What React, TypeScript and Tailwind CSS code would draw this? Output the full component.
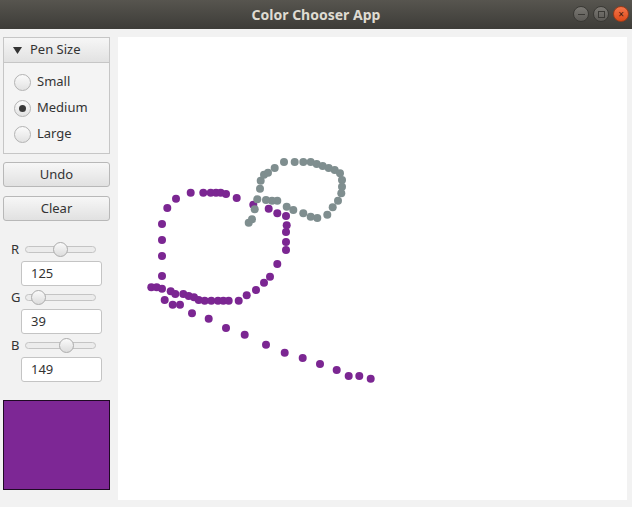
import React from 'react'

const PURPLE = '#7b2692'
const GRAY = '#7f8e8f'

// dots in page coordinates (canvas starts at 118,37)
const GRAY_DOTS: [number, number][] = [
  [284, 162], [294.7, 162], [303.3, 162], [310.7, 162], [316.7, 164], [322.7, 166],
  [328.7, 168], [334.7, 170], [340, 173.3], [342, 180], [342, 186.7], [341.3, 193.3],
  [338, 200.7], [332.7, 207.3], [327.3, 214.7], [317.3, 218], [310.7, 216.7],
  [303.3, 213.3], [293.3, 210], [286.7, 206.7], [277.3, 200.7], [272, 200.7],
  [266, 200], [257.3, 199.3], [254.7, 209.3], [252, 219.3], [248.7, 222.7],
  [260, 188.7], [260.7, 180.7], [264, 174.7], [268, 172.7], [274.7, 168],
]

const PURPLE_DOTS: [number, number][] = [
  [190.7, 192.7], [203.3, 192.7], [210.7, 192.7], [216, 192.7], [220.7, 192.7],
  [226, 194], [236.7, 198], [176, 198.7], [167.3, 208], [162, 224], [162, 240],
  [162, 256], [162, 276], [151.3, 287.3], [156.7, 287.3], [162, 288.7],
  [170.7, 291.3], [175.3, 294], [183.3, 294], [188.7, 296], [194, 297.3],
  [198.7, 300], [204.7, 300.7], [211.3, 300.7], [218, 300.7], [223.3, 300.7],
  [228.7, 300.7], [238.7, 300.7], [246.7, 295.3], [256, 290], [264, 282.7],
  [270, 276.7], [277.3, 264], [286, 250], [286, 242], [286, 232], [286.7, 225.3],
  [286, 216], [277.3, 213.3], [268.7, 208.7], [253.3, 204.7],
  [164.7, 300], [172.7, 304.7], [180, 304.7], [192, 313.3], [208.7, 318.7],
  [226, 328], [244.7, 334.7], [266, 344.7], [284.7, 352.7], [302.7, 358],
  [320, 364], [336.7, 370], [348.7, 376], [359.3, 376], [370.7, 378.7],
]

const SIZES = ['Small', 'Medium', 'Large']

const CHANNELS = [
  { label: 'R', value: 125 },
  { label: 'G', value: 39 },
  { label: 'B', value: 149 },
]

function Radio({ label, checked }: { label: string; checked?: boolean }) {
  return (
    <div className="flex items-center h-[26px] pl-[10px]">
      <div className="w-[17px] h-[17px] rounded-full border border-[#b3b3b3] bg-gradient-to-b from-[#fbfbfb] to-[#e2e2e2] flex items-center justify-center">
        {checked && <div className="w-[7px] h-[7px] rounded-full bg-[#3a3a3a]" />}
      </div>
      <span className="ml-[6px] text-[13px] text-[#333]">{label}</span>
    </div>
  )
}

function Button({ label }: { label: string }) {
  return (
    <div className="h-[25px] w-[107px] rounded-[3px] border border-[#b8b8b8] bg-gradient-to-b from-[#f7f7f7] to-[#e1e1e1] flex items-center justify-center text-[13px] text-[#333]">
      {label}
    </div>
  )
}

function ChannelSlider({ label, value }: { label: string; value: number }) {
  const center = 26 + (value * 65) / 255
  return (
    <div>
      <div className="relative h-[17px] flex items-center">
        <span className="w-[22px] pl-[8px] text-[13px] text-[#333]">{label}</span>
        <div className="w-[71px] h-[7px] rounded-full border border-[#c4c4c4] bg-[#ececec]" />
        <div
          className="absolute top-[1px] w-[15px] h-[15px] rounded-full border border-[#acacac] bg-gradient-to-b from-[#fafafa] to-[#dcdcdc]"
          style={{ left: center - 7.5 }}
        />
      </div>
      <div className="ml-[18px] mt-[3px] w-[81px] h-[25px] rounded-[3px] border border-[#c4c4c4] bg-white flex items-center pl-[9px] text-[13px] text-[#333]">
        {value}
      </div>
    </div>
  )
}

export default function App() {
  return (
    <div
      className="w-[632px] h-[507px] flex flex-col bg-[#f2f2f2] overflow-hidden"
      style={{ fontFamily: '"Noto Sans", "DejaVu Sans", sans-serif' }}
    >
      {/* title bar */}
      <div className="relative shrink-0 h-[29px] bg-gradient-to-b from-[#57554f] to-[#3d3c38] flex items-center justify-center">
        <span className="text-[14px] font-bold text-[#dfdbd2]">Color Chooser App</span>
        <div className="absolute right-[3px] top-[6px] flex gap-[4px]">
          <div className="w-[16px] h-[16px] rounded-full bg-gradient-to-b from-[#7a7873] to-[#5c5a56] border border-[#3a3935] flex items-center justify-center">
            <div className="w-[7px] h-[1px] bg-[#3a3935]" />
          </div>
          <div className="w-[16px] h-[16px] rounded-full bg-gradient-to-b from-[#7a7873] to-[#5c5a56] border border-[#3a3935] flex items-center justify-center">
            <div className="w-[7px] h-[7px] border border-[#3a3935]" />
          </div>
          <div className="w-[16px] h-[16px] rounded-full bg-gradient-to-b from-[#f47549] to-[#df4a16] border border-[#9b3b1a] flex items-center justify-center text-[10px] leading-none text-[#3a1a0d]">
            ×
          </div>
        </div>
      </div>

      {/* body */}
      <div className="flex-1 min-h-0 flex pt-[8px] pb-[7px] pr-[5px]">
        {/* controls */}
        <div className="w-[118px] pl-[3px] flex flex-col">
          <div className="w-[107px] border border-[#c6c6c6]">
            <div className="h-[25px] bg-gradient-to-b from-[#f6f6f6] to-[#e2e2e2] border-b border-[#c6c6c6] flex items-center pl-[9px]">
              <svg width="9" height="7" viewBox="0 0 9 7">
                <path d="M0 0 H9 L4.5 7 Z" fill="#333" />
              </svg>
              <span className="ml-[8px] text-[13px] text-[#333]">Pen Size</span>
            </div>
            <div className="py-[6px] bg-[#f4f4f4]">
              {SIZES.map(s => (
                <Radio key={s} label={s} checked={s === 'Medium'} />
              ))}
            </div>
          </div>

          <div className="mt-[8px] flex flex-col gap-[9px]">
            <Button label="Undo" />
            <Button label="Clear" />
          </div>

          <div className="mt-[20px] flex flex-col gap-[3px]">
            {CHANNELS.map(c => (
              <ChannelSlider key={c.label} label={c.label} value={c.value} />
            ))}
          </div>

          <div className="mt-[18px] w-[107px] h-[90px] border border-[#1e0a24] bg-[rgb(125,39,149)]" />
        </div>

        {/* canvas */}
        <div className="flex-1 bg-white">
          <svg width="509" height="463" viewBox="118 37 509 463">
            {PURPLE_DOTS.map(([x, y], i) => (
              <circle key={'p' + i} cx={x} cy={y} r={4} fill={PURPLE} />
            ))}
            {GRAY_DOTS.map(([x, y], i) => (
              <circle key={'g' + i} cx={x} cy={y} r={4} fill={GRAY} />
            ))}
          </svg>
        </div>
      </div>
    </div>
  )
}
